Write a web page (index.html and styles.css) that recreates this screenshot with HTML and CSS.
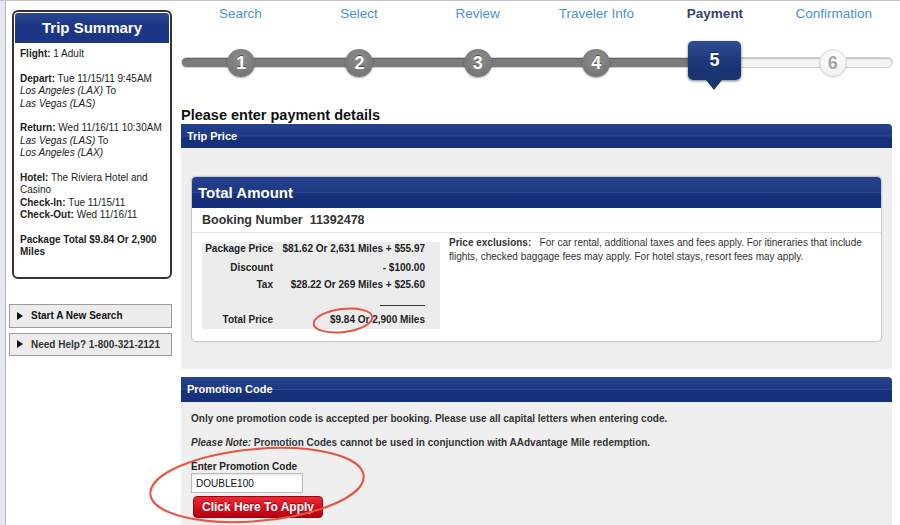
FILE: index.html
```html
<!DOCTYPE html>
<html lang="en">
<head>
    <meta charset="UTF-8">
    <title>Payment - Trip Booking</title>
    <link rel="stylesheet" href="styles.css">
</head>
<body>
<div class="page">
    <div class="edge"></div>

    <aside class="sidebar">
        <div class="summary">
            <h2 class="summary-title">Trip Summary</h2>
            <div class="summary-body">
                <p><b>Flight:</b> 1 Adult</p>
                <p><b>Depart:</b> Tue 11/15/11 9:45AM<br><i>Los Angeles (LAX)</i> To<br><i>Las Vegas (LAS)</i></p>
                <p><b>Return:</b> Wed 11/16/11 10:30AM<br><i>Las Vegas (LAS)</i> To<br><i>Los Angeles (LAX)</i></p>
                <p><b>Hotel:</b> The Riviera Hotel and Casino<br><b>Check-In:</b> Tue 11/15/11<br><b>Check-Out:</b> Wed 11/16/11</p>
                <p><b>Package Total $9.84 Or 2,900 Miles</b></p>
            </div>
        </div>
        <div class="side-btn first"><span class="tri"></span>Start A New Search</div>
        <div class="side-btn help"><span class="tri"></span>Need Help? 1-800-321-2121</div>
    </aside>

    <main class="main">
        <div class="steps">
            <span class="step-label">Search</span>
            <span class="step-label">Select</span>
            <span class="step-label">Review</span>
            <span class="step-label">Traveler Info</span>
            <span class="step-label active">Payment</span>
            <span class="step-label">Confirmation</span>
        </div>
        <div class="track">
            <div class="cell"><span class="dot">1</span></div>
            <div class="cell"><span class="dot">2</span></div>
            <div class="cell"><span class="dot">3</span></div>
            <div class="cell"><span class="dot">4</span></div>
            <div class="cell"><span class="dot current">5</span></div>
            <div class="cell"><span class="dot todo">6</span></div>
        </div>

        <h1 class="title">Please enter payment details</h1>

        <section class="panel">
            <div class="panel-head">Trip Price</div>
            <div class="panel-body price-body">
                <div class="total-box">
                    <div class="total-head">Total Amount</div>
                    <div class="booking">Booking Number&nbsp; 11392478</div>
                    <div class="total-main">
                        <div class="price-table">
                            <div class="prow r1"><span class="plabel">Package Price</span><span class="pval">$81.62 Or 2,631 Miles + $55.97</span></div>
                            <div class="prow r2"><span class="plabel">Discount</span><span class="pval">- $100.00</span></div>
                            <div class="prow r3"><span class="plabel">Tax</span><span class="pval">$28.22 Or 269 Miles + $25.60</span></div>
                            <div class="psep"></div>
                            <div class="prow r4"><span class="plabel">Total Price</span><span class="pval">$9.84 Or 2,900 Miles</span></div>
                        </div>
                        <p class="exclusions"><b>Price exclusions:</b>&nbsp;&nbsp; For car rental, additional taxes and fees apply. For itineraries that include flights, checked baggage fees may apply. For hotel stays, resort fees may apply.</p>
                    </div>
                </div>
            </div>
        </section>

        <section class="panel promo">
            <div class="panel-head">Promotion Code</div>
            <div class="panel-body promo-body">
                <p>Only one promotion code is accepted per booking. Please use all capital letters when entering code.</p>
                <p><i>Please Note:</i> Promotion Codes cannot be used in conjunction with AAdvantage Mile redemption.</p>
                <p class="promo-label">Enter Promotion Code</p>
                <input class="promo-input" value="DOUBLE100">
                <div class="apply">Click Here To Apply</div>
            </div>
        </section>
    </main>

    <svg class="marks" width="900" height="525" viewBox="0 0 900 525">
        <ellipse cx="343" cy="319.5" rx="29.5" ry="11.5" transform="rotate(-7 343 319.5)"/>
        <ellipse cx="257" cy="484" rx="107" ry="36" transform="rotate(-5 257 484)"/>
    </svg>
</div>
</body>
</html>
```

FILE: styles.css
```css
body {
    margin: 0;
    font-family: "Liberation Sans", Arial, Helvetica, sans-serif;
    color: #222;
    background: #fff;
    border-top: 1px solid #c4c4c4;
}
.page {
    position: relative;
    display: flex;
    height: 524px;
    overflow: hidden;
}
.edge {
    width: 5px;
    background: #e6e8ef;
    border-right: 1px solid #b9b9b9;
}

/* sidebar */
.sidebar {
    width: 175px;
    padding-top: 9px;
}
.summary {
    margin-left: 6px;
    width: 160px;
    box-sizing: border-box;
    border: 2px solid #333;
    border-radius: 6px;
    padding: 1px;
}
.summary-title {
    margin: 0;
    height: 30px;
    line-height: 30px;
    background: linear-gradient(#2a4593, #1c3786 40%, #1b3584);
    border-radius: 3px 3px 0 0;
    color: #fff;
    font-size: 15px;
    text-align: center;
}
.summary-body {
    padding: 5px 5px 17px 5px;
    font-size: 10px;
    line-height: 12.4px;
    color: #222;
}
.summary-body p {
    margin: 0 0 12.4px 0;
}
.summary-body p:last-child {
    margin-bottom: 0;
}
.side-btn {
    margin-left: 3px;
    width: 163px;
    box-sizing: border-box;
    height: 24px;
    display: flex;
    align-items: center;
    background: #ececec;
    border: 1px solid #9c9c9c;
    font-size: 10px;
    font-weight: bold;
    color: #111;
}
.side-btn.first {
    margin-top: 25px;
}
.side-btn.help {
    margin-top: 5px;
    height: 23px;
    color: #333;
}
.tri {
    width: 0;
    height: 0;
    margin: 0 8px 0 7px;
    border-left: 6px solid #111;
    border-top: 4px solid transparent;
    border-bottom: 4px solid transparent;
}

/* main column */
.main {
    width: 712px;
}
.steps {
    display: grid;
    grid-template-columns: repeat(6, 1fr);
    padding-top: 5px;
}
.step-label {
    text-align: center;
    font-size: 13.5px;
    line-height: 16px;
    color: #4a90d6;
}
.step-label.active {
    font-weight: bold;
    color: #34456d;
}
.track {
    margin-top: 35px;
    height: 11px;
    box-sizing: border-box;
    display: flex;
    align-items: center;
    border-radius: 6px;
    border: 1px solid #cfcfcf;
    background: linear-gradient(to right, #7b7b7b 75%, #f3f3f3 75%);
    box-shadow: inset 0 1px 1px rgba(0,0,0,0.2);
}
.cell {
    flex: 1;
    height: 9px;
    display: flex;
    align-items: center;
    justify-content: center;
}
.dot {
    flex: none;
    width: 28px;
    height: 28px;
    border-radius: 50%;
    background: radial-gradient(circle at 50% 35%, #8e8e8e, #6d6d6d);
    box-shadow: 0 1px 2px rgba(0,0,0,0.35);
    color: #fff;
    font-size: 18px;
    font-weight: bold;
    line-height: 28px;
    text-align: center;
    text-shadow: 0 -1px 0 rgba(0,0,0,0.45);
}
.dot.current {
    position: relative;
    width: 53px;
    height: 39px;
    line-height: 39px;
    margin-bottom: 4px;
    border-radius: 5px;
    background: linear-gradient(#2e4d92, #1c3778 55%, #19336f);
    box-shadow: 0 1px 3px rgba(0,0,0,0.55);
}
.dot.current::after {
    content: "";
    position: absolute;
    left: 50%;
    bottom: -10px;
    margin-left: -8px;
    border-left: 8px solid transparent;
    border-right: 8px solid transparent;
    border-top: 10px solid #19336f;
}
.dot.todo {
    box-sizing: border-box;
    background: radial-gradient(circle at 50% 35%, #ffffff, #ececec);
    border: 1px solid #d6d6d6;
    line-height: 26px;
    color: #a6a6a6;
    text-shadow: 0 1px 0 #fff;
    box-shadow: 0 1px 1px rgba(0,0,0,0.1);
}
.title {
    margin: 39px 0 0 0;
    font-size: 14.5px;
    line-height: 17px;
    color: #111;
}

/* panels */
.panel {
    margin-right: 1px;
}
.panel-head {
    height: 24px;
    line-height: 24px;
    padding-left: 6px;
    border-radius: 0 4px 0 0;
    background: linear-gradient(#25418d, #1e3a84 46%, #2c4893 50%, #17317a 54%, #15307a);
    color: #fff;
    font-size: 11px;
    font-weight: bold;
}
.panel-body {
    background: #efefef;
}
.price-body {
    padding: 28px 10px 27px 10px;
}
.total-box {
    background: #fff;
    border: 1px solid #c9c9d2;
    border-radius: 5px;
    box-shadow: 0 0 2px rgba(0,0,0,0.12);
}
.total-head {
    height: 31px;
    line-height: 31px;
    padding-left: 6px;
    border-radius: 4px 4px 0 0;
    background: linear-gradient(#25418d, #1e3a84 46%, #2c4893 50%, #17317a 54%, #15307a);
    color: #fff;
    font-size: 15px;
    font-weight: bold;
}
.booking {
    height: 24px;
    line-height: 24px;
    padding-left: 10px;
    border-bottom: 1px solid #e2e2e2;
    font-size: 12.5px;
    font-weight: bold;
    color: #333;
}
.total-main {
    display: flex;
    padding: 3px 10px 12px 10px;
}
.price-table {
    margin-top: 6px;
    width: 238px;
    flex: none;
    padding: 1px 15px 3px 0;
    box-sizing: border-box;
    background: #ececec;
    font-size: 10px;
    font-weight: bold;
    color: #222;
}
.prow {
    display: flex;
    line-height: 12px;
}
.plabel {
    width: 76px;
    padding-right: 5px;
    box-sizing: border-box;
    text-align: right;
}
.pval {
    flex: 1;
    text-align: right;
}
.r2 { margin-top: 7px; }
.r3 { margin-top: 5px; }
.r4 { margin-top: 8px; }
.psep {
    margin: 14px 0 0 auto;
    width: 45px;
    height: 1px;
    background: #333;
}
.exclusions {
    margin: 0 0 0 9px;
    font-size: 10px;
    line-height: 13.5px;
    color: #333;
}

.promo {
    margin-top: 8px;
}
.promo .panel-head {
    height: 25px;
    line-height: 25px;
}
.promo-body {
    padding: 10px 10px 30px 10px;
    font-size: 10px;
    font-weight: bold;
    color: #333;
}
.promo-body p {
    margin: 0 0 11px 0;
    line-height: 13px;
}
.promo-body .promo-label {
    margin: 0;
    color: #222;
}
.promo-input {
    display: block;
    width: 112px;
    height: 20px;
    box-sizing: border-box;
    margin: 0;
    padding: 0 4px;
    border: 1px solid #bdbdbd;
    box-shadow: inset 0 1px 2px rgba(0,0,0,0.12);
    font-family: "Liberation Sans", Arial, sans-serif;
    font-size: 10px;
    color: #111;
}
.apply {
    margin: 3px 0 0 2px;
    width: 130px;
    height: 22px;
    box-sizing: border-box;
    line-height: 20px;
    text-align: center;
    border: 1px solid #a3000f;
    border-radius: 4px;
    background: linear-gradient(#ee2a36, #d3101f 50%, #b5000f);
    color: #fff;
    font-size: 12px;
    font-weight: bold;
    text-shadow: 0 -1px 0 rgba(0,0,0,0.35);
}

/* hand-drawn annotation rings */
.marks {
    position: absolute;
    left: 0;
    top: 0;
    pointer-events: none;
}
.marks ellipse {
    fill: none;
    stroke: #e6553f;
    stroke-width: 2;
}
```
